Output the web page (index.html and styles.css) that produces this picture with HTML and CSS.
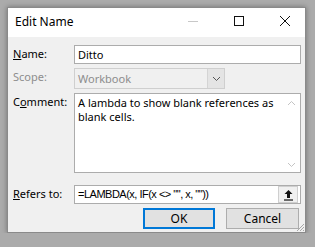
FILE: index.html
```html
<!DOCTYPE html>
<html lang="en">
<head>
    <meta charset="UTF-8">
    <meta name="viewport" content="width=device-width, initial-scale=1.0">
    <title>Edit Name</title>
    <link rel="stylesheet" href="styles.css">
</head>
<body>
    <div class="dialog">
        <div class="titlebar">
            <span class="title">Edit Name</span>
            <div class="controls">
                <span class="ctl">
                    <svg width="12" height="12" viewBox="0 0 12 12"><path d="M1 6.5h10" stroke="#c8c8c8" stroke-width="1"/></svg>
                </span>
                <span class="ctl">
                    <svg width="12" height="12" viewBox="0 0 12 12"><rect x="1.5" y="1.5" width="9" height="9" fill="none" stroke="#111" stroke-width="1"/></svg>
                </span>
                <span class="ctl">
                    <svg width="12" height="12" viewBox="0 0 12 12"><path d="M1 1l10 10M11 1L1 11" stroke="#111" stroke-width="1"/></svg>
                </span>
            </div>
        </div>

        <div class="form">
            <label class="lbl"><u>N</u>ame:</label>
            <div class="field">Ditto</div>

            <label class="lbl disabled">Scope:</label>
            <div class="select">
                <span class="select-text">Workbook</span>
                <span class="select-btn">
                    <svg width="9" height="6" viewBox="0 0 9 6"><path d="M1 1l3.5 3.5L8 1" fill="none" stroke="#555" stroke-width="1"/></svg>
                </span>
            </div>

            <label class="lbl">C<u>o</u>mment:</label>
            <div class="memo">
                <div class="memo-text">A lambda to show blank references as blank cells.</div>
                <div class="scroll">
                    <svg width="9" height="6" viewBox="0 0 9 6"><path d="M1 5l3.5-3.5L8 5" fill="none" stroke="#c4c4c4" stroke-width="1"/></svg>
                    <svg width="9" height="6" viewBox="0 0 9 6"><path d="M1 1l3.5 3.5L8 1" fill="none" stroke="#c4c4c4" stroke-width="1"/></svg>
                </div>
            </div>

            <label class="lbl refers"><u>R</u>efers to:</label>
            <div class="field formula">
                <span class="formula-text">=LAMBDA(x, IF(x &lt;&gt; "", x, ""))</span>
                <span class="collapse">
                    <svg width="11" height="12" viewBox="0 0 11 12"><path d="M5.5 1L1.5 5h2.5v4h3V5h2.5z" fill="#111"/><path d="M1 11h9" stroke="#111" stroke-width="1.2"/></svg>
                </span>
            </div>
        </div>

        <div class="buttons">
            <button class="btn default">OK</button>
            <button class="btn">Cancel</button>
        </div>

        <svg class="grip" width="10" height="10" viewBox="0 0 10 10">
            <path d="M9 2L2 9M9 5L5 9M9 8L8 9" stroke="#a8a8a8" stroke-width="1"/>
        </svg>
    </div>
</body>
</html>
```

FILE: styles.css
```css
* {
    box-sizing: border-box;
    margin: 0;
    padding: 0;
}

body {
    background: #ababab;
    font-family: 'Noto Sans', 'Open Sans', sans-serif;
    font-size: 11px;
    color: #000;
    padding: 7px 0 0 7px;
}

.dialog {
    position: relative;
    width: 299px;
    height: 226px;
    background: #f0f0f0;
    border: 1px solid #8a8a8a;
    box-shadow: 0 0 5px rgba(0, 0, 0, 0.35);
}

.titlebar {
    height: 29px;
    background: #fff;
    display: flex;
    align-items: center;
    justify-content: space-between;
    padding-left: 7px;
}

.title {
    font-size: 12px;
    padding-bottom: 2px;
}

.controls {
    display: flex;
    height: 100%;
    margin-right: -3px;
}

.ctl {
    width: 46px;
    display: flex;
    align-items: center;
    justify-content: center;
    padding-bottom: 3px;
}

.form {
    display: grid;
    grid-template-columns: 61px 227px;
    grid-template-rows: 19px 21px 80px 27px;
    row-gap: 4px;
    padding: 8px 0 0 5px;
}

.lbl {
    line-height: 16px;
    padding-top: 1px;
}

.lbl.disabled {
    color: #8d8d8d;
}

.lbl.refers {
    margin-top: 8px;
}

.field {
    background: #fff;
    border: 1px solid #acacac;
    padding: 0 3px;
    line-height: 17px;
    height: 19px;
}

.select {
    width: 151px;
    display: flex;
    background: #f0f0f0;
    border: 1px solid #cfcfcf;
}

.select-text {
    flex: 1;
    color: #8d8d8d;
    padding-left: 3px;
    line-height: 19px;
}

.select-btn {
    width: 17px;
    background: #e4e4e4;
    border-left: 1px solid #d4d4d4;
    display: flex;
    align-items: center;
    justify-content: center;
}

.memo {
    display: flex;
    background: #fff;
    border: 1px solid #acacac;
}

.memo-text {
    flex: 1;
    padding: 2px 3px;
    line-height: 14px;
}

.scroll {
    width: 17px;
    display: flex;
    flex-direction: column;
    justify-content: space-between;
    align-items: center;
    padding: 6px 0 4px;
}

.formula {
    margin-top: 8px;
    display: flex;
    align-items: center;
    padding-right: 2px;
}

.formula-text {
    flex: 1;
    font-family: 'Liberation Sans', Arial, sans-serif;
    letter-spacing: -0.5px;
}

.collapse {
    width: 20px;
    height: 17px;
    background: #f0f0f0;
    border: 1px solid #cfcfcf;
    display: flex;
    align-items: center;
    justify-content: center;
}

.buttons {
    display: flex;
    justify-content: flex-end;
    gap: 11px;
    padding: 4px 6px 0 0;
}

.btn {
    width: 73px;
    height: 21px;
    font-family: inherit;
    font-size: 12px;
    background: #e1e1e1;
    border: 1px solid #adadad;
    color: #000;
}

.btn.default {
    width: 72px;
    border: 2px solid #0078d7;
}

.grip {
    position: absolute;
    right: 0;
    bottom: 0;
}
```
